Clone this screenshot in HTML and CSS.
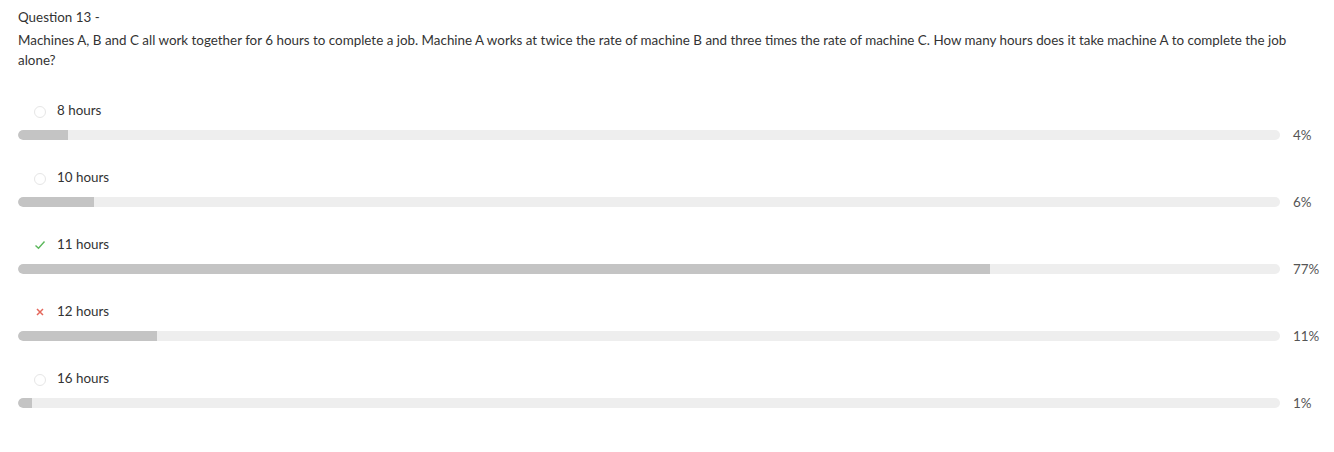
FILE: index.html
```html
<!DOCTYPE html>
<html lang="en">
<head>
<meta charset="utf-8">
<title>Question 13</title>
<link rel="stylesheet" href="styles.css">
</head>
<body>
<div class="page">
  <div class="q-title">Question 13 -</div>
  <div class="q-text">Machines A, B and C all work together for 6 hours to complete a job. Machine A works at twice the rate of machine B and three times the rate of machine C. How many hours does it take machine A to complete the job alone?</div>

  <div class="options">
    <div class="option">
      <div class="label"><span class="icon radio"></span><span>8 hours</span></div>
      <div class="bar-row"><div class="track"><div class="fill" style="width:4%"></div></div><span class="pct">4%</span></div>
    </div>
    <div class="option">
      <div class="label"><span class="icon radio"></span><span>10 hours</span></div>
      <div class="bar-row"><div class="track"><div class="fill" style="width:6%"></div></div><span class="pct">6%</span></div>
    </div>
    <div class="option">
      <div class="label"><span class="icon"><svg viewBox="0 0 12 12" width="12" height="12"><path d="M1.5 6.5 L4.5 9.3 L10.5 2.5" fill="none" stroke="#5cb85c" stroke-width="1.4"/></svg></span><span>11 hours</span></div>
      <div class="bar-row"><div class="track"><div class="fill" style="width:77%"></div></div><span class="pct">77%</span></div>
    </div>
    <div class="option">
      <div class="label"><span class="icon"><svg viewBox="0 0 12 12" width="12" height="12"><path d="M3 3 L9 9 M9 3 L3 9" fill="none" stroke="#e4675b" stroke-width="1.5"/></svg></span><span>12 hours</span></div>
      <div class="bar-row"><div class="track"><div class="fill" style="width:11%"></div></div><span class="pct">11%</span></div>
    </div>
    <div class="option">
      <div class="label"><span class="icon radio"></span><span>16 hours</span></div>
      <div class="bar-row"><div class="track"><div class="fill" style="width:1.1%"></div></div><span class="pct">1%</span></div>
    </div>
  </div>
</div>
</body>
</html>
```

FILE: styles.css
```css
html, body {
  margin: 0;
  padding: 0;
  background: #ffffff;
}
body {
  font-family: Lato, "Open Sans", "Liberation Sans", sans-serif;
  font-size: 13.4px;
  line-height: 20px;
  color: #333333;
}
.page {
  padding: 7px 18px 0 18px;
}
.q-title {
  margin-bottom: 3px;
}
.options {
  margin-top: 30px;
  display: flex;
  flex-direction: column;
  gap: 27px;
}
.option {
  display: flex;
  flex-direction: column;
  gap: 10px;
}
.label {
  display: flex;
  align-items: center;
  padding-left: 16px;
  gap: 11px;
  height: 20px;
}
.icon {
  width: 12px;
  height: 12px;
  display: inline-flex;
  flex: none;
  margin-top: 1px;
}
.radio {
  box-sizing: border-box;
  border: 1px solid #e6e6e6;
  border-radius: 50%;
  margin-top: 4px;
}
.bar-row {
  display: flex;
  align-items: center;
  gap: 13px;
  height: 10px;
}
.track {
  flex: 1;
  height: 10px;
  background: #eeeeee;
  border-radius: 5px;
  overflow: hidden;
}
.fill {
  height: 100%;
  background: #c4c4c4;
  border-radius: 5px 0 0 5px;
}
.pct {
  width: 23px;
  flex: none;
  color: #555555;
  white-space: nowrap;
}
```
